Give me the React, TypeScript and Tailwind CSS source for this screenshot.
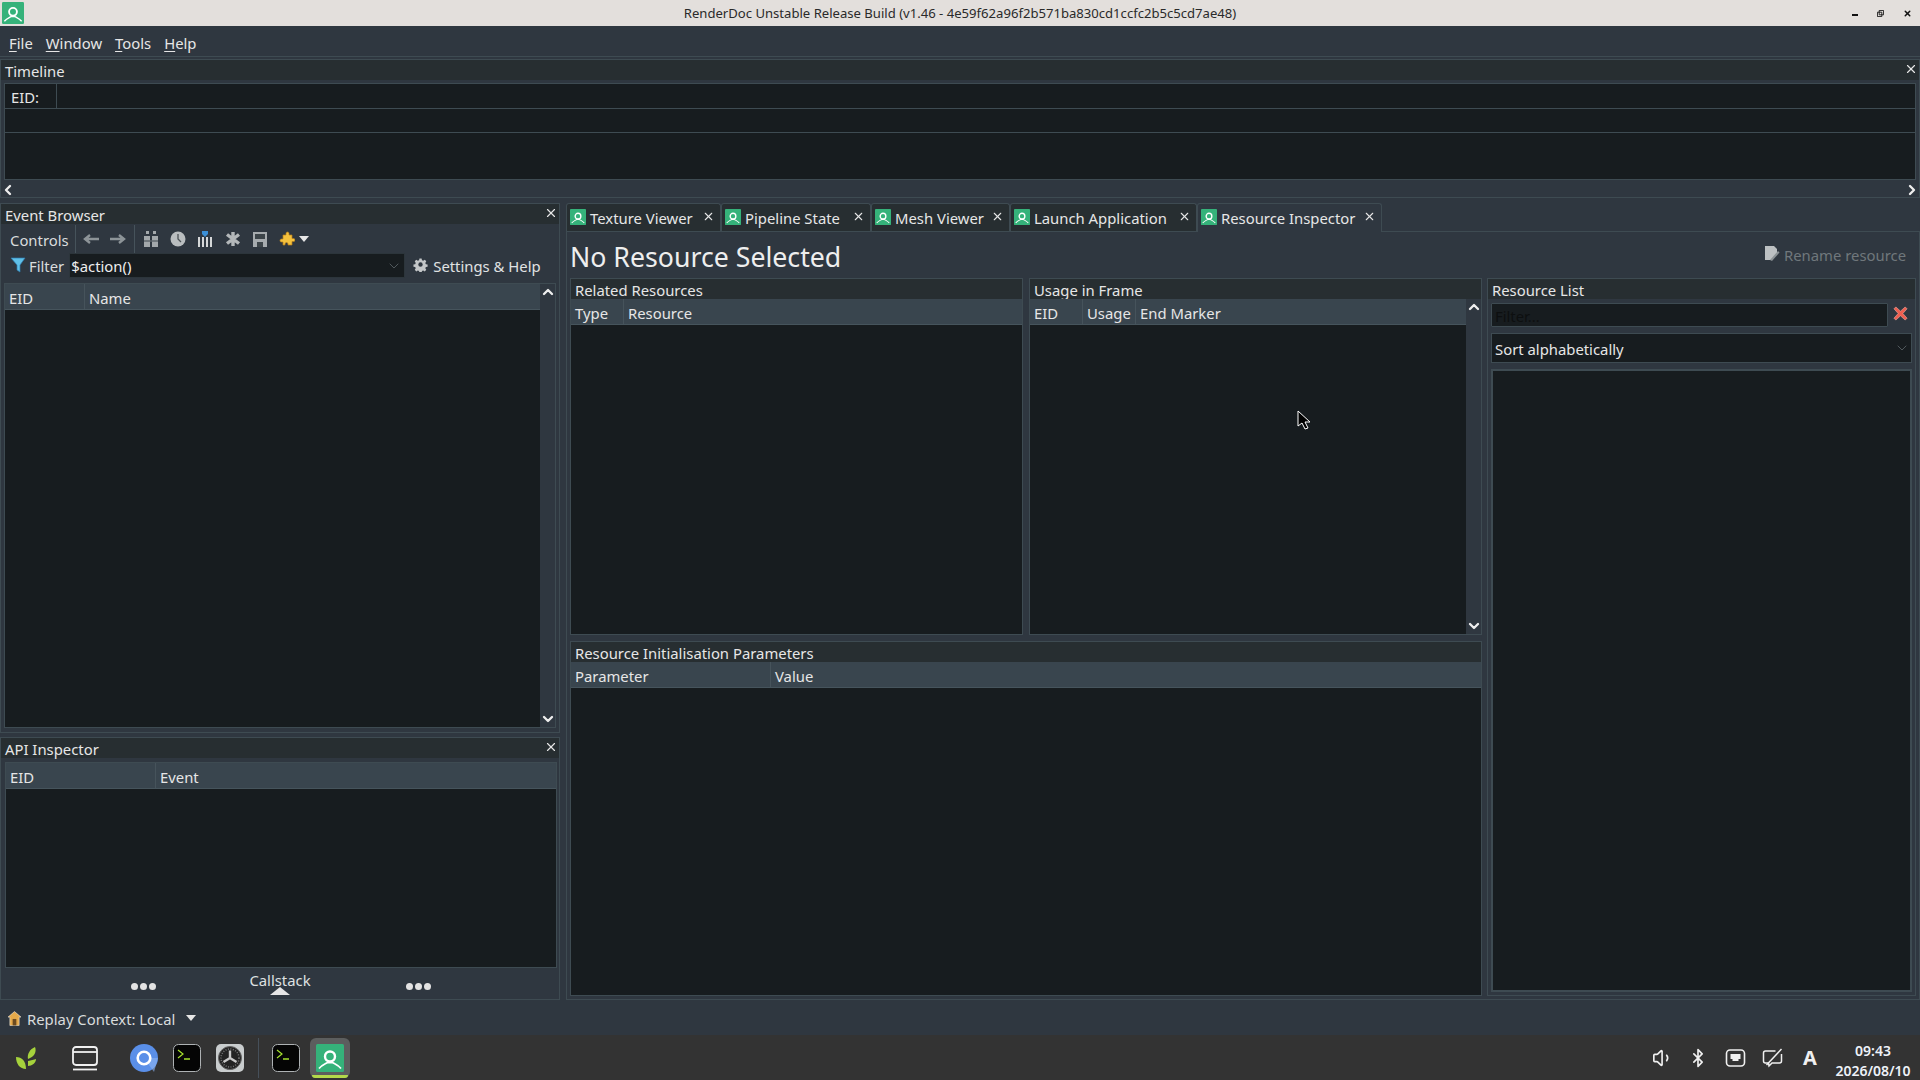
import { ChevronDown, ChevronLeft, ChevronRight, ChevronUp, X, Bluetooth, Volume1 } from 'lucide-react';
import type { ReactNode } from 'react';

function RdIcon({ className }: { className: string }) {
  return (
    <svg viewBox="0 0 28 28" className={className}>
      <rect width="28" height="28" rx="1.5" fill="#35b27a" />
      <circle cx="14" cy="12.5" r="5" fill="none" stroke="#fff" strokeWidth="2.4" />
      <path d="M3 24.5c3-3.5 6-4.5 8.5-6h5c2.500 1.500 5.500 2.500 8.500 6" fill="none" stroke="#fff" strokeWidth="1.8" />
    </svg>
  );
}

function PanelTitle({ children, close }: { children: ReactNode; close?: boolean }) {
  return (
    <div className="h-[20px] shrink-0 bg-[#272e31] flex items-center justify-between pl-[4px] pr-[1px] leading-none">
      <span className="pt-[2px] text-[#e6e6e6]">{children}</span>
      {close && <X size={14} strokeWidth={2} className="text-[#e6e6e6] self-start mt-[2px]" />}
    </div>
  );
}

function HeaderCell({ w, children }: { w?: string; children: ReactNode }) {
  return (
    <div className={`${w ?? 'flex-1'} h-full pl-[4px] pt-[3px] flex items-center border-r border-[#46535b] last:border-r-0 text-[#e6e6e6]`}>
      {children}
    </div>
  );
}

function Header({ children }: { children: ReactNode }) {
  return <div className="h-[26px] shrink-0 flex bg-[#39454e] border-b border-[#46545c]">{children}</div>;
}

function Scroll() {
  return (
    <div className="w-[15px] shrink-0 bg-[#2f3740] flex flex-col items-center justify-between">
      <ChevronUp size={16} strokeWidth={3.5} className="text-[#eeeeee] shrink-0" />
      <ChevronDown size={16} strokeWidth={3.5} className="text-[#eeeeee] shrink-0" />
    </div>
  );
}

function ToolIcons() {
  return (
    <div className="flex items-center">
      <svg viewBox="0 0 18 12" className="w-[18px] h-[12px] ml-[6px]"><path d="M17 6H4M8 2 3 6l5 4" fill="none" stroke="#8d9498" strokeWidth="2.400" /></svg>
      <svg viewBox="0 0 18 12" className="w-[18px] h-[12px] ml-[9px]"><path d="M1 6h13M10 2l5 4-5 4" fill="none" stroke="#8d9498" strokeWidth="2.400" /></svg>
      <div className="w-px h-[28px] bg-[#46535b] ml-[7px]" />
      <svg viewBox="0 0 16 18" className="w-[16px] h-[18px] ml-[8px]">
        <path d="M3 1h3v3H3zM10 1h3v3h-3zM1 6h6v11H1zM9 6h6v11H9z" fill="#a3a8ab" />
        <path d="M1 11h14" stroke="#5f676c" strokeWidth="1.500" />
      </svg>
      <svg viewBox="0 0 16 16" className="w-[16px] h-[16px] ml-[11px]">
        <circle cx="8" cy="8" r="7.500" fill="#b9bdbf" />
        <path d="M8 3v5l3 3" stroke="#4b5256" strokeWidth="1.300" fill="none" />
      </svg>
      <svg viewBox="0 0 16 18" className="w-[16px] h-[18px] ml-[11px]">
        <path d="M1 7h2v10H1zM5 7h2v10H5zM9 7h2v10H9zM13 7h2v10h-2z" fill="#d5d7d8" />
        <path d="M5 1h6v3L8 7 5 4z" fill="#3b8fd6" />
      </svg>
      <svg viewBox="0 0 16 16" className="w-[16px] h-[16px] ml-[12px]">
        <path d="M8 1v14M2 3.500l12 9M14 3.500l-12 9" stroke="#b4b8ba" strokeWidth="3.400" />
      </svg>
      <svg viewBox="0 0 16 16" className="w-[16px] h-[16px] ml-[11px]">
        <path d="M1 1h14v15H1z" fill="#a6abae" />
        <path d="M3 3h10v5H3zM5 11h6v5H5z" fill="#3c4449" />
      </svg>
      <svg viewBox="0 0 16 16" className="w-[16px] h-[16px] ml-[11px]">
        <path d="M4 4h3V2.500a1.500 1.500 0 0 1 3 0V4h3v3.500h1.500a1.500 1.500 0 0 1 0 3H13V14H9v-1a1.500 1.500 0 0 0-3 0v1H4v-3H2.500a1.500 1.500 0 0 1 0-3H4z" fill="#f4c13d" stroke="#b8801b" strokeWidth="0.700" />
      </svg>
      <svg viewBox="0 0 10 6" className="w-[10px] h-[6px] ml-[4px]"><path d="M0 0h10L5 6z" fill="#e6e6e6" /></svg>
    </div>
  );
}

function EventBrowser() {
  return (
    <div className="h-[530px] flex flex-col border border-[#3e4b52]">
      <PanelTitle close>Event Browser</PanelTitle>
      <div className="h-[29px] shrink-0 flex items-center pl-[9px]">
        <span className="text-[#d9dcdd] pt-[3px]">Controls</span>
        <div className="w-px h-[28px] bg-[#46535b] ml-[6px]" />
        <ToolIcons />
      </div>
      <div className="h-[25px] shrink-0 flex items-center pl-[9px]">
        <svg viewBox="0 0 16 16" className="w-[16px] h-[16px] shrink-0 -mt-[2px]">
          <path d="M1 1h14L10 8v7l-3-2V8z" fill="#5fc0e8" stroke="#2f7db0" strokeWidth="0.700" />
        </svg>
        <span className="ml-[3px] pt-[2px] text-[#d9dcdd]">Filter</span>
        <div className="ml-[5px] w-[336px] h-[25px] bg-[#171c1f] border border-[#2c353b] flex items-center justify-between pl-px pr-[2px] text-[#eeeeee]">
          <span className="pt-[1px]">$action()</span>
          <ChevronDown size={16} strokeWidth={1} className="text-[#6e777c]" />
        </div>
        <svg viewBox="0 0 24 24" className="w-[15px] h-[15px] ml-[8px] -mt-[3px]">
          <path d="m10 1h4l.7 3.200 2.300 1 2.800-1.800 2.800 2.800-1.800 2.800 1 2.300 3.200.7v4l-3.200.7-1 2.300 1.800 2.800-2.800 2.800-2.800-1.800-2.300 1-.7 3.200h-4l-.7-3.200-2.300-1-2.800 1.800-2.800-2.800 1.800-2.800-1-2.300-3.200-.7v-4l3.200-.7 1-2.300-1.800-2.800 2.800-2.800 2.800 1.800 2.300-1z" transform="translate(1.600 1.600) scale(.87)" fill="#c4c7c9" />
          <circle cx="12" cy="12" r="3.500" fill="#2f3740" />
        </svg>
        <span className="ml-[5px] pt-[2px] text-[#e0e2e3]">Settings &amp; Help</span>
      </div>
      <div className="mt-[5px] ml-[3px] mr-[3px] flex-1 flex border border-[#3e4b52] mb-[4px] min-h-0">
        <div className="flex-1 flex flex-col min-w-0">
          <Header>
            <HeaderCell w="w-[80px]">EID</HeaderCell>
            <HeaderCell>Name</HeaderCell>
          </Header>
          <div className="flex-1 bg-[#171c1f]" />
        </div>
        <Scroll />
      </div>
    </div>
  );
}

function Dots() {
  return (
    <>
      <span className="w-[7px] h-[7px] rounded-full bg-[#e3e3e3]" />
      <span className="w-[7px] h-[7px] rounded-full bg-[#e3e3e3]" />
      <span className="w-[7px] h-[7px] rounded-full bg-[#e3e3e3]" />
    </>
  );
}

function ApiInspector() {
  return (
    <div className="h-[263px] flex flex-col border border-[#3e4b52]">
      <PanelTitle close>API Inspector</PanelTitle>
      <div className="mt-[4px] ml-[4px] mr-[2px] h-[206px] flex flex-col border border-[#3e4b52]">
        <Header>
          <HeaderCell w="w-[150px]">EID</HeaderCell>
          <HeaderCell>Event</HeaderCell>
        </Header>
        <div className="flex-1 bg-[#171c1f]" />
      </div>
      <div className="flex-1 flex">
        <div className="w-[249px] shrink-0 flex items-start justify-center pt-[15px] gap-[2px] pl-[35px]">
          <Dots />
        </div>
        <div className="w-[60px] flex flex-col items-center">
          <span className="text-[#dfe1e2] leading-none mt-[5px] whitespace-nowrap">Callstack</span>
          <svg viewBox="0 0 20 8" className="w-[20px] h-[8px] -mt-[1px]"><path d="M0 8 10 0l10 8z" fill="#e6e6e6" /></svg>
        </div>
        <div className="flex-1 flex items-start justify-center pt-[15px] gap-[2px] pr-[33px]">
          <Dots />
        </div>
      </div>
    </div>
  );
}

const tabs = [
  { name: 'Texture Viewer', w: 'w-[155px]' },
  { name: 'Pipeline State', w: 'w-[150px]' },
  { name: 'Mesh Viewer', w: 'w-[139px]' },
  { name: 'Launch Application', w: 'w-[187px]' },
  { name: 'Resource Inspector', w: 'w-[185px]' },
];

function Tabs() {
  return (
    <div className="h-[29px] shrink-0 flex border-b border-[#3e4b52]">
      {tabs.map((t, i) => (
        <div
          key={t.name}
          className={`${t.w} ${i === 4 ? 'bg-[#2f3740] h-[29px]' : 'bg-[#272e31] h-[28px]'} shrink-0 flex items-start pt-[4px] pl-[3px] border border-b-0 border-[#3e4b52] rounded-t-[3px] relative`}
        >
          <RdIcon className="w-[16px] h-[16px] shrink-0 mt-[1px]" />
          <span className="ml-[4px] leading-[20px] text-[#e6e6e6] whitespace-nowrap">{t.name}</span>
          <X size={13} strokeWidth={2} className="absolute right-[5px] top-[6px] text-[#e6e6e6]" />
        </div>
      ))}
    </div>
  );
}

function Related() {
  return (
    <div className="w-[453px] shrink-0 h-full flex flex-col border border-[#3e4b52]">
      <PanelTitle>Related Resources</PanelTitle>
      <Header>
        <HeaderCell w="w-[53px]">Type</HeaderCell>
        <HeaderCell>Resource</HeaderCell>
      </Header>
      <div className="flex-1 bg-[#171c1f]" />
    </div>
  );
}

function Usage() {
  return (
    <div className="w-[453px] shrink-0 h-full flex flex-col border border-[#3e4b52]">
      <PanelTitle>Usage in Frame</PanelTitle>
      <div className="flex-1 flex min-h-0">
        <div className="flex-1 flex flex-col min-w-0">
          <Header>
            <HeaderCell w="w-[53px]">EID</HeaderCell>
            <HeaderCell w="w-[53px]">Usage</HeaderCell>
            <HeaderCell>End Marker</HeaderCell>
          </Header>
          <div className="flex-1 bg-[#171c1f]" />
        </div>
        <Scroll />
      </div>
    </div>
  );
}

function InitParams() {
  return (
    <div className="mt-[6px] flex-1 flex flex-col border border-[#3e4b52]">
      <PanelTitle>Resource Initialisation Parameters</PanelTitle>
      <Header>
        <HeaderCell w="w-[200px]">Parameter</HeaderCell>
        <HeaderCell>Value</HeaderCell>
      </Header>
      <div className="flex-1 bg-[#171c1f]" />
    </div>
  );
}

function ResourceList() {
  return (
    <div className="w-[429px] shrink-0 h-full flex flex-col border border-[#3e4b52]">
      <PanelTitle>Resource List</PanelTitle>
      <div className="mt-[4px] flex items-center px-[3px]">
        <div className="w-[397px] h-[24px] bg-[#171c1f] border border-[#3e4b52] rounded-[1px] pl-[3px] pt-[2px] flex items-center text-[#0d0f10]">
          Filter...
        </div>
        <svg viewBox="0 0 16 16" className="w-[15px] h-[15px] ml-[5px] -mt-[4px]">
          <path d="M3 1 8 5.500 13 1l2 2-4.500 5L15 13l-2 2-5-4.500L3 15l-2-2 4.500-5L1 3z" fill="#ee5f50" stroke="#f7b3a9" strokeWidth="0.600" />
        </svg>
      </div>
      <div className="mt-[6px] mx-[3px] h-[30px] bg-[#171c1f] border border-[#3e4b52] pl-[3px] pr-[1px] flex items-center justify-between text-[#e6e6e6]">
        <span className="pt-[2px]">Sort alphabetically</span>
        <ChevronDown size={16} strokeWidth={1} className="text-[#6e777c]" />
      </div>
      <div className="mt-[6px] mx-[3px] mb-[3px] flex-1 bg-[#171c1f] border-2 border-[#3e4b52]" />
    </div>
  );
}

function ResourceInspector() {
  return (
    <div className="flex-1 flex flex-col border border-t-0 border-[#3e4b52] pl-[3px] pr-[2px] min-h-0">
      <div className="h-[46px] shrink-0 flex items-center justify-between">
        <span className="text-[26.700px] leading-none text-[#eeeeee] pt-[4px]">No Resource Selected</span>
        <div className="flex items-center mr-[11px] text-[#70777c]">
          <svg viewBox="0 0 16 16" className="w-[16px] h-[16px] -mt-[2px]">
            <path d="M1 0h9l3 3v4l-5 7H1z" fill="#bcc0c2" />
            <path d="M6 14 14 5l1.500 1.500L8 15z" fill="#8b9295" />
          </svg>
          <span className="ml-[4px]">Rename resource</span>
        </div>
      </div>
      <div className="flex-1 flex min-h-0 gap-[5px] pb-[3px]">
        <div className="w-[912px] shrink-0 flex flex-col">
          <div className="h-[357px] shrink-0 flex gap-[6px] w-full">
            <Related />
            <Usage />
          </div>
          <InitParams />
        </div>
        <ResourceList />
      </div>
    </div>
  );
}

function Terminal({ className }: { className: string }) {
  return (
    <svg viewBox="0 0 28 28" className={`w-[28px] h-[28px] ${className}`}>
      <rect x="0.500" y="0.500" width="27" height="27" rx="5" fill="#050505" stroke="#aeb2b4" />
      <path d="m5 6 5 4-5 4" fill="none" stroke="#a6e22e" strokeWidth="1.200" />
      <path d="M11 15h6" stroke="#a6e22e" strokeWidth="1.500" />
    </svg>
  );
}

function TaskIcons() {
  return (
    <div className="flex items-center">
      <svg viewBox="0 0 22 24" className="w-[22px] h-[24px] ml-[15px]">
        <path d="M1 11c6 0 10 4 10 12C5 23 1 18 1 11zM20 1c2 5-1 10-7 12-1-5 2-10 7-12zM13 15c3-1 6-1 8-2 0 4-4 7-8 7z" fill="#a6d23c" />
      </svg>
      <svg viewBox="0 0 26 26" className="w-[26px] h-[26px] ml-[35px]" fill="none" stroke="#f0f0f0" strokeWidth="1.800">
        <rect x="1" y="2" width="24" height="18" rx="3" />
        <path d="M1 7h24" />
        <path d="M1 24.500h24" strokeWidth="1.800" />
      </svg>
      <svg viewBox="0 0 28 28" className="w-[28px] h-[28px] ml-[32px]">
        <circle cx="14" cy="14" r="14" fill="#5a8fe8" />
        <path d="M24 28 14 14 28 14z" fill="#8db4f0" opacity="0.600" />
        <circle cx="14" cy="14" r="6.300" fill="#5a8fe8" stroke="#fff" strokeWidth="2.600" />
      </svg>
      <Terminal className="ml-[15px]" />
      <svg viewBox="0 0 28 28" className="w-[28px] h-[28px] ml-[15px]">
        <rect width="28" height="28" rx="5" fill="#c9cdce" />
        <circle cx="14" cy="14" r="11.500" fill="#232323" stroke="#666" strokeWidth="1" />
        <circle cx="14" cy="14" r="9" fill="none" stroke="#777" strokeWidth="1.500" strokeDasharray="1 1.500" />
        <path d="M14 14V6.500M14 14l-6.500 4M14 14l6.500 4" stroke="#c8c8c8" strokeWidth="2.400" />
      </svg>
      <div className="w-px h-[40px] bg-[#46505a] ml-[14px]" />
      <Terminal className="ml-[13px]" />
      <div className="relative ml-[10px] w-[40px] h-[40px] rounded-[6px] bg-[#5c5e5e] flex items-center justify-center">
        <RdIcon className="w-[28px] h-[28px]" />
        <div className="absolute left-[2px] right-[2px] bottom-0 h-[3px] rounded-b-[6px] bg-[#b3d94a]" />
      </div>
    </div>
  );
}

function Tray() {
  return (
    <div className="flex items-center text-[#f0f0f0] pr-[7px]">
      <Volume1 size={22} strokeWidth={1.800} />
      <Bluetooth size={20} strokeWidth={2} className="ml-[14px]" />
      <svg viewBox="0 0 20 18" className="w-[21px] h-[18px] ml-[17px]">
        <rect x="1" y="1" width="18" height="16" rx="3.500" fill="none" stroke="#f0f0f0" strokeWidth="1.600" />
        <path d="M5 5h10v5h-2v2H7v-2H5z" fill="#f0f0f0" />
      </svg>
      <svg viewBox="0 0 20 20" className="w-[21px] h-[20px] ml-[16px]" fill="none" stroke="#f0f0f0" strokeWidth="1.500">
        <path d="M13 3H3a2 2 0 0 0-2 2v8a2 2 0 0 0 2 2h3l.5 3 3-3H17a2 2 0 0 0 2-2V6" />
        <path d="M19 1 4 17" />
      </svg>
      <span className="ml-[20px] w-[14px] text-[20px] font-bold leading-none">A</span>
      <div className="ml-[16px] w-[80px] mt-[7px] flex flex-col items-center text-[14px] font-semibold leading-[20px] text-[#eef2f8]">
        <span>09:43</span>
        <span>2026/08/10</span>
      </div>
    </div>
  );
}

export default function App() {
  return (
    <div className="w-[1920px] h-[1080px] overflow-hidden flex flex-col bg-[#2f3740] text-[14.850px] text-[#e6e6e6] font-['Noto_Sans',sans-serif] relative">
      <div className="h-[26px] shrink-0 bg-[#e3dfdc] flex items-center justify-between pl-[2px] pr-[8px] relative">
        <RdIcon className="w-[22px] h-[22px]" />
        <span className="absolute left-0 right-0 text-center pt-[1px] text-[13.100px] text-[#2a2a2a] pointer-events-none">
          RenderDoc Unstable Release Build (v1.46 - 4e59f62a96f2b571ba830cd1ccfc2b5c5cd7ae48)
        </span>
        <div className="flex items-center gap-[19px] text-[#111]">
          <div className="w-[6px] h-[2px] bg-[#111] mt-[3px]" />
          <svg viewBox="0 0 8 8" className="w-[7px] h-[7px]"><path d="M2.500.5h5v5h-5zM.5 2.500h5v5h-5z" fill="none" stroke="#111" /></svg>
          <X size={9} strokeWidth={4} />
        </div>
      </div>

      <div className="h-[31px] shrink-0 flex items-center pt-[4px] border-b border-[#3e4b52] pl-[9px] gap-[13px] text-[#e6e6e6]">
        <span><span className="underline underline-offset-2">F</span>ile</span>
        <span><span className="underline underline-offset-2">W</span>indow</span>
        <span><span className="underline underline-offset-2">T</span>ools</span>
        <span><span className="underline underline-offset-2">H</span>elp</span>
      </div>

      <div className="mt-[2px] h-[139px] shrink-0 flex flex-col border border-[#3e4b52]">
        <PanelTitle close>Timeline</PanelTitle>
        <div className="mx-[3px] mt-[3px] h-[97px] shrink-0 bg-[#171c1f] border border-[#3e4b52] flex flex-col">
          <div className="h-[25px] border-b border-[#3e4b52] flex">
            <div className="w-[52px] h-full border-r border-[#3e4b52] pl-[6px] pt-[3px] flex items-center text-[#e6e6e6]">EID:</div>
          </div>
          <div className="h-[24px] border-b border-[#3e4b52]" />
        </div>
        <div className="flex-1 flex items-center justify-between pt-[2px]">
          <ChevronLeft size={16} strokeWidth={3.5} className="text-[#eeeeee] -ml-[1px]" />
          <ChevronRight size={16} strokeWidth={3.5} className="text-[#eeeeee] -mr-[1px]" />
        </div>
      </div>

      <div className="mt-[5px] h-[797px] shrink-0 flex">
        <div className="w-[560px] shrink-0 flex flex-col gap-[4px]">
          <EventBrowser />
          <ApiInspector />
        </div>
        <div className="ml-[6px] flex-1 flex flex-col min-w-0">
          <Tabs />
          <ResourceInspector />
        </div>
      </div>

      <div className="h-[35px] shrink-0 flex items-center pt-[4px] pl-[8px]">
        <svg viewBox="0 0 14 15" className="w-[13px] h-[15px] -mt-[3px]">
          <path d="M7 0 0 6h2v9h10V6h2z" fill="#e5a94a" stroke="#f0ece4" strokeWidth="0.600" />
          <path d="M5 8h4v7H5z" fill="#6b4a20" />
        </svg>
        <span className="ml-[6px] text-[#d9dcdd]">Replay Context: Local</span>
        <svg viewBox="0 0 10 6" className="w-[10px] h-[6px] ml-[11px] -mt-[4px]"><path d="M0 0h10L5 6z" fill="#e6e6e6" /></svg>
      </div>

      <div className="h-[45px] shrink-0 bg-[#333333] flex items-center justify-between">
        <TaskIcons />
        <Tray />
      </div>

      <svg viewBox="0 0 14 22" className="absolute left-[1297px] top-[410px] w-[14px] h-[22px]">
        <path d="M1 1v15l4-3 3 6 3-1-3-6h5z" fill="#000" stroke="#fff" strokeWidth="1" />
      </svg>
    </div>
  );
}
